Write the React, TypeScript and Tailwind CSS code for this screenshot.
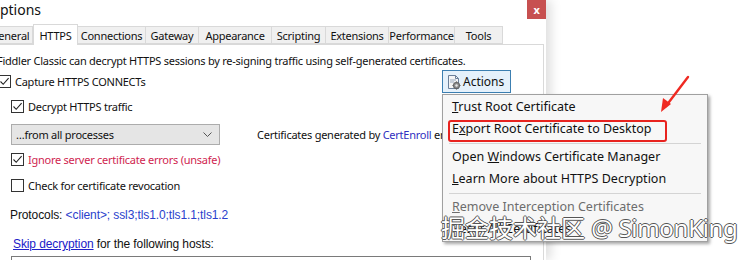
import React from "react";

const ui = "font-['Noto_Sans',sans-serif]";

const tabs = [
  { name: "General", w: "w-[45px]" },
  { name: "HTTPS", w: "w-[45px]", active: true },
  { name: "Connections", w: "w-[68px]" },
  { name: "Gateway", w: "w-[53px]" },
  { name: "Appearance", w: "w-[73px]" },
  { name: "Scripting", w: "w-[54px]" },
  { name: "Extensions", w: "w-[63px]" },
  { name: "Performance", w: "w-[66px]" },
  { name: "Tools", w: "w-[48px]" },
];

function Box({ checked }: { checked?: boolean }) {
  return (
    <span className="w-[13px] h-[13px] border border-[#333] bg-white flex items-center justify-center shrink-0">
      {checked && (
        <svg width="11" height="11" viewBox="0 0 11 11">
          <path d="M1.5 5.5 L4.2 8.3 L9.6 2.2" fill="none" stroke="#222" strokeWidth="1.1" />
        </svg>
      )}
    </span>
  );
}

function Check({ label, checked, red, className = "" }: { label: string; checked?: boolean; red?: boolean; className?: string }) {
  return (
    <div className={`flex items-center gap-[4px] h-[14px] ${className}`}>
      <Box checked={checked} />
      <span className={red ? "text-[#d0254f]" : "text-[#111]"}>{label}</span>
    </div>
  );
}

function CertIcon() {
  return (
    <svg width="16" height="16" viewBox="0 0 16 16">
      <path d="M2.5 1.5 H9.5 L12.5 4.5 V14.5 H2.5 Z" fill="#f4f4f4" stroke="#6b7f99" />
      <path d="M9.5 1.5 V4.5 H12.5" fill="none" stroke="#6b7f99" />
      <path d="M4 6 H10 M4 8 H8" stroke="#9aa9bd" />
      <circle cx="10.5" cy="11.5" r="3.2" fill="#8a8a8a" stroke="#555" strokeWidth="0.8" />
      <circle cx="10.5" cy="11.5" r="1.2" fill="#e6e6e6" />
      <path d="M10.5 7.6 V8.6 M10.5 14.4 V15.4 M6.6 11.5 H7.6 M13.4 11.5 H14.4" stroke="#555" strokeWidth="1.2" />
    </svg>
  );
}

function MenuItem({ children, gray }: { children: React.ReactNode; gray?: boolean }) {
  return (
    <div className={`h-[22px] flex items-center pl-[9px] whitespace-nowrap ${gray ? "text-[#6d6d6d]" : "text-[#111]"}`}>
      {children}
    </div>
  );
}

function Sep() {
  return (
    <div className="h-[6px] flex items-center px-[6px]">
      <div className="h-px w-full bg-[#d4d4d4]" />
    </div>
  );
}

export default function App() {
  return (
    <div className={`relative w-[743px] h-[260px] bg-white overflow-hidden text-[11px] tracking-[-0.25px] leading-none ${ui}`}>
      {/* dialog */}
      <div className="w-[546px] h-full flex flex-col bg-white shadow-[5px_0_10px_rgba(0,0,0,0.13)] relative z-0">
        <div className="h-[24px] flex justify-between shrink-0">
          <span className="text-[14px] tracking-normal text-[#111] ml-[-11px] mt-[3px]">Options</span>
          <div className="w-[19px] h-[19px] bg-[#c75050] text-white flex items-center justify-center text-[11px] font-bold">x</div>
        </div>
        <div className="h-[20px] flex items-end ml-[-12px] shrink-0">
          {tabs.map((t) =>
            t.active ? (
              <div key={t.name} className={`${t.w} h-[21px] -mb-px bg-white border border-[#d9d9d9] border-b-0 flex items-center justify-center text-[#111] relative z-10`}>
                {t.name}
              </div>
            ) : (
              <div key={t.name} className={`${t.w} h-[18px] bg-[#f0f0f0] border border-[#d9d9d9] border-l-0 flex items-center justify-center text-[#111]`}>
                {t.name}
              </div>
            )
          )}
        </div>
        <div className="flex-1 border-t border-r border-[#d9d9d9] mr-[2px] flex flex-col">
          <div className="ml-[-3px] mt-[10px] whitespace-nowrap text-[#111]">
            Fiddler Classic can decrypt HTTPS sessions by re-signing traffic using self-generated certificates.
          </div>
          <div className="flex items-center mt-[4px] h-[23px]">
            <Check label="Capture HTTPS CONNECTs" checked className="ml-[-2px]" />
            <div className="ml-auto mr-[32px] w-[69px] h-[23px] border border-[#3c7fb1] bg-[#e5f1fb] flex items-center gap-[1px] pl-[3px] text-[12px] tracking-normal">
              <CertIcon />
              <span className="text-[#111]">Actions</span>
            </div>
          </div>
          <Check label="Decrypt HTTPS traffic" checked className="ml-[11px] mt-[6px]" />
          <div className="flex items-center mt-[11px]">
            <div className="ml-[11px] w-[209px] h-[21px] bg-[#e5e5e5] border border-[#acacac] flex items-center justify-between pl-[4px] pr-[7px]">
              <span className="text-[#111]">…from all processes</span>
              <svg width="9" height="6" viewBox="0 0 9 6">
                <path d="M0.5 0.5 L4.5 4.5 L8.5 0.5" fill="none" stroke="#555" />
              </svg>
            </div>
            <span className="ml-[37px] text-[#111] whitespace-nowrap">
              Certificates generated by <span className="text-[#3030c0]">CertEnroll</span> engine
            </span>
          </div>
          <Check label="Ignore server certificate errors (unsafe)" checked red className="ml-[11px] mt-[7px]" />
          <Check label="Check for certificate revocation" className="ml-[11px] mt-[12px]" />
          <div className="ml-[10px] mt-[17px] text-[12px] font-['Liberation_Sans',sans-serif] text-[#111] tracking-[-0.1px]">
            Protocols: <span className="text-[#2a3fcc]">&lt;client&gt;; ssl3;tls1.0;tls1.1;tls1.2</span>
          </div>
          <div className="ml-[13px] mt-[17px] text-[12px] font-['Liberation_Sans',sans-serif] text-[#111] tracking-[-0.1px]">
            <span className="text-[#2020c8] underline">Skip decryption</span> for the following hosts:
          </div>
          <div className="ml-[11px] mr-[12px] mt-[6px] h-[20px] border border-[#7a7a7a] border-b-0" />
        </div>
      </div>

      {/* actions menu */}
      <div className="absolute left-[442px] top-[94px] w-[266px] h-[148px] bg-[#f7f7f7] border border-[#a0a0a0] shadow-[2px_2px_3px_rgba(0,0,0,0.35)] py-[1px] z-20 text-[12.5px] tracking-normal">
        <MenuItem><span><span className="underline">T</span>rust Root Certificate</span></MenuItem>
        <MenuItem><span>E<span className="underline">x</span>port Root Certificate to Desktop</span></MenuItem>
        <Sep />
        <MenuItem><span>Open <span className="underline">W</span>indows Certificate Manager</span></MenuItem>
        <MenuItem><span><span className="underline">L</span>earn More about HTTPS Decryption</span></MenuItem>
        <Sep />
        <MenuItem gray><span><span className="underline">R</span>emove Interception Certificates</span></MenuItem>
        <MenuItem><span>Reset All Certificates</span></MenuItem>
      </div>

      {/* red highlight */}
      <div className="absolute left-[448px] top-[120px] w-[219px] h-[22px] border-2 border-[#e8231f] rounded-[3px] z-30" />

      {/* arrow */}
      <svg className="absolute left-[650px] top-[70px] z-30" width="50" height="50" viewBox="0 0 50 50">
        <path d="M38 7 L16 36" stroke="#ef2a22" strokeWidth="2.4" strokeLinecap="round" />
        <path d="M11 42 L13 28 L21 34 Z" fill="#ef2a22" />
      </svg>

      {/* watermark */}
      <div className="absolute left-[441px] top-[216px] z-40 text-[24px] leading-none text-white whitespace-nowrap tracking-normal font-['Noto_Sans','Noto_Sans_CJK_SC',sans-serif] [text-shadow:1px_0_0_#555,-1px_0_0_#555,0_1px_0_#555,0_-1px_0_#555]">
        掘金技术社区 <span className="tracking-[-0.3px]">@ SimonKing</span>
      </div>
    </div>
  );
}
